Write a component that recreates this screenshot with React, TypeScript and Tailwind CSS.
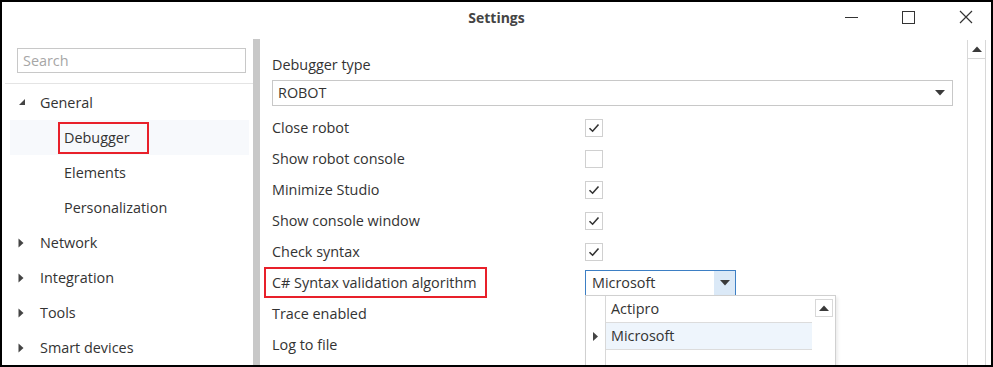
import React from 'react'

const FONT = { fontFamily: '"Open Sans", "Noto Sans", Arial, sans-serif' }

const treeItems = [
  { label: 'General', level: 0, arrow: 'open' },
  { label: 'Debugger', level: 1, selected: true },
  { label: 'Elements', level: 1 },
  { label: 'Personalization', level: 1 },
  { label: 'Network', level: 0, arrow: 'closed' },
  { label: 'Integration', level: 0, arrow: 'closed' },
  { label: 'Tools', level: 0, arrow: 'closed' },
  { label: 'Smart devices', level: 0, arrow: 'closed' },
]

const options = [
  { label: 'Close robot', checked: true },
  { label: 'Show robot console', checked: false },
  { label: 'Minimize Studio', checked: true },
  { label: 'Show console window', checked: true },
  { label: 'Check syntax', checked: true },
]

function Arrow({ kind }: { kind?: string }) {
  if (kind === 'open')
    return (
      <svg width="8" height="8" viewBox="0 0 8 8" className="mt-[-2px]">
        <polygon points="7,1 7,7 1,7" fill="#444" />
      </svg>
    )
  if (kind === 'closed')
    return (
      <svg width="6" height="10" viewBox="0 0 6 10">
        <polygon points="0.5,0.5 5.5,5 0.5,9.5" fill="#444" />
      </svg>
    )
  return null
}

function CaretDown() {
  return (
    <svg width="10" height="6" viewBox="0 0 10 6">
      <polygon points="0,0 10,0 5,5.5" fill="#3a3a3a" />
    </svg>
  )
}

function CaretUp() {
  return (
    <svg width="10" height="6" viewBox="0 0 10 6">
      <polygon points="0,6 10,6 5,0.5" fill="#3a3a3a" />
    </svg>
  )
}

function Checkbox({ checked }: { checked: boolean }) {
  return (
    <div className="w-[18px] h-[18px] border border-[#d0d0d0] bg-white flex items-center justify-center">
      {checked && (
        <svg width="12" height="10" viewBox="0 0 12 10">
          <path d="M1.5 5.2 L4.6 8.2 L10.5 1.5" stroke="#333" strokeWidth="1.6" fill="none" />
        </svg>
      )}
    </div>
  )
}

export default function App() {
  return (
    <div
      className="w-[993px] h-[367px] border-2 border-black bg-white flex flex-col overflow-hidden text-[14.4px] text-[#333]"
      style={FONT}
    >
      {/* Title bar */}
      <div className="h-[34px] shrink-0 relative flex items-center justify-center">
        <span className="font-bold text-[#444] text-[14px] mt-[-4px]">Settings</span>
        <div className="absolute right-0 top-0 h-full flex items-center">
          <div className="w-[13px] h-[1px] bg-[#333] mr-[44px] mt-[-4px]" />
          <div className="w-[13px] h-[13px] border border-[#333] mr-[44px] mt-[-4px]" />
          <svg width="14" height="14" viewBox="0 0 14 14" className="mr-[18px] mt-[-4px]">
            <path d="M1 1 L13 13 M13 1 L1 13" stroke="#333" strokeWidth="1.2" />
          </svg>
        </div>
      </div>

      <div className="flex flex-1 min-h-0">
        {/* Left tree */}
        <div className="w-[251px] shrink-0 flex flex-col">
          <div className="mt-3 ml-[15px] w-[229px] h-[27px] border border-[#c8c8c8] flex items-center px-[5px] text-[#a6a6a6]">
            Search
          </div>
          <div className="mt-[10px] ml-[3px] h-[1px] bg-[#e4e4e4]" />
          <div className="flex flex-col pt-[1px]">
            {treeItems.map((it) => (
              <div
                key={it.label}
                className={`h-[35px] flex items-center ${it.selected ? 'bg-[#f7f9fc] ml-[8px] mr-[4px] pl-[48px]' : it.level === 1 ? 'pl-[62px]' : 'pl-[16px]'}`}
              >
                {it.level === 0 && (
                  <span className="w-[22px] flex items-center">
                    <Arrow kind={it.arrow} />
                  </span>
                )}
                {it.selected ? (
                  <span className="border-2 border-[#e8202a] h-[32px] w-[91px] flex items-center pl-[4px]">
                    {it.label}
                  </span>
                ) : (
                  <span>{it.label}</span>
                )}
              </div>
            ))}
          </div>
        </div>

        {/* Splitter */}
        <div className="w-[7px] shrink-0 bg-[#c8c8c8] mt-[3px]" />

        {/* Right content */}
        <div className="flex-1 flex min-w-0">
          <div className="flex-1 pl-[12px] pr-[14px] pt-[19px]">
            <div className="h-[20px] flex items-center">Debugger type</div>
            <div className="mt-[5px] h-[26px] border border-[#c8c8c8] flex items-center justify-between px-[5px]">
              <span>ROBOT</span>
              <span className="mr-[2px]"><CaretDown /></span>
            </div>
            <div className="mt-[6px]">
              {options.map((o) => (
                <div key={o.label} className="h-[31px] flex items-center">
                  <span className="w-[313px]">{o.label}</span>
                  <Checkbox checked={o.checked} />
                </div>
              ))}
              <div className="h-[31px] flex items-center relative">
                <span className="w-[313px]">
                  <span className="-ml-[8px] inline-flex items-center border-2 border-[#e8202a] h-[31px] w-[223px] pl-[6px]">
                    C# Syntax validation algorithm
                  </span>
                </span>
                <div className="w-[151px] h-[26px] border border-[#3d7fc4] flex items-center">
                  <span className="flex-1 pl-[6px]">Microsoft</span>
                  <span className="w-[21px] h-full bg-[#dbe9f7] flex items-center justify-center">
                    <CaretDown />
                  </span>
                </div>
                {/* Dropdown popup */}
                <div className="absolute left-[313px] top-[28px] w-[251px] h-[80px] bg-white border border-[#d0d0d0] flex shadow-[2px_2px_3px_rgba(0,0,0,0.08)]">
                  <div className="w-[19px] flex flex-col">
                    <div className="h-[27px]" />
                    <div className="h-[27px] flex items-center justify-center">
                      <svg width="5" height="9" viewBox="0 0 5 9">
                        <polygon points="0,0 5,4.5 0,9" fill="#444" />
                      </svg>
                    </div>
                  </div>
                  <div className="w-[207px] flex flex-col border-l border-[#d8d8d8]">
                    <div className="h-[27px] flex items-center pl-[5px] border-b border-[#dcdcdc]">Actipro</div>
                    <div className="h-[27px] flex items-center pl-[5px] bg-[#eef5fc] border-b border-[#dcdcdc]">Microsoft</div>
                  </div>
                  <div className="flex-1 flex flex-col items-center pt-[3px]">
                    <div className="w-[18px] h-[18px] border border-[#d8d8d8] flex items-center justify-center">
                      <CaretUp />
                    </div>
                  </div>
                </div>
              </div>
              <div className="h-[31px] flex items-center">Trace enabled</div>
              <div className="h-[31px] flex items-center">Log to file</div>
            </div>
          </div>

          {/* Scrollbar */}
          <div className="w-[19px] shrink-0 mr-[5px] mt-[4px] border-x border-[#d8d8d8] flex flex-col">
            <div className="h-[19px] border-b border-[#d8d8d8] flex items-center justify-center">
              <CaretUp />
            </div>
          </div>
        </div>
      </div>
    </div>
  )
}
